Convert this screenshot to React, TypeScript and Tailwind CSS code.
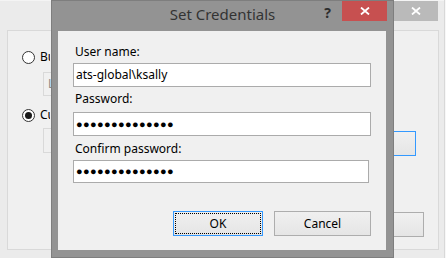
const ui = { fontFamily: '"Noto Sans", "Open Sans", sans-serif' };

function Radio({ checked }: { checked?: boolean }) {
  return (
    <span className="flex h-[13px] w-[13px] items-center justify-center rounded-full border border-[#333333] bg-white">
      {checked && <span className="h-[7px] w-[7px] rounded-full bg-[#1a1a1a]" />}
    </span>
  );
}

function CloseGlyph() {
  return (
    <svg width="10" height="8" viewBox="0 0 10 8">
      <path d="M1 0.5 L9 7.5 M9 0.5 L1 7.5" stroke="white" strokeWidth="1.8" fill="none" />
    </svg>
  );
}

// text of the window behind is cut off where the dialog starts
function Clipped({ text, width }: { text: string; width: string }) {
  return <span className={`overflow-hidden whitespace-nowrap ${width}`}>{text}</span>;
}

function BackgroundWindow() {
  return (
    <div className="flex h-full w-[445px] flex-col border-r border-[#d8d8d8] bg-[#ebebeb]">
      <div className="flex h-[21px] justify-end border-t border-[#f4f4f4] pr-[6px]">
        <div className="flex h-[20px] w-[45px] items-center justify-center bg-[#bababa]">
          <CloseGlyph />
        </div>
      </div>
      <div className="ml-[7px] mt-[9px] flex h-[220px] w-[432px] flex-col border border-[#d9d9d9] bg-[#f0f0f0] pl-[14px] pt-[17px] text-[12px] text-black">
        <div className="flex items-center gap-[5px]">
          <Radio />
          <Clipped text="Built-in account" width="w-[10px]" />
        </div>
        <div className="ml-[21px] mt-[6px] flex h-[24px] w-[300px] items-center border border-[#d9d9d9] bg-[#f0f0f0] pl-[4px] text-[#8a8a8a]">
          <Clipped text="Local System" width="w-[4px]" />
        </div>
        <div className="mt-[10px] flex items-center gap-[5px]">
          <Radio checked />
          <Clipped text="Custom account" width="w-[10px]" />
        </div>
        <div className="ml-[21px] mt-[4px] flex items-start gap-[4px]">
          <div className="h-[25px] w-[280px] border border-[#d9d9d9] bg-[#f0f0f0]" />
          <div className="mt-[3px] h-[25px] w-[89px] border border-[#3399ff] bg-gradient-to-b from-[#f0f0f0] to-[#e5e5e5]" />
        </div>
        <div className="mt-[56px] flex justify-end pr-[14px]">
          <div className="h-[25px] w-[90px] border border-[#adadad] bg-gradient-to-b from-[#f0f0f0] to-[#e5e5e5]" />
        </div>
      </div>
    </div>
  );
}

function Field({ children, narrow }: { children: React.ReactNode; narrow?: boolean }) {
  return (
    <div
      className={`flex items-center border border-[#ababab] bg-white pl-[2px] text-[12px] text-black ${
        narrow ? "h-[23px] w-[296px]" : "h-[24px] w-[298px]"
      }`}
    >
      {children}
    </div>
  );
}

function Dots() {
  return (
    <span className="text-[11px] tracking-[0.35px]" style={{ fontFamily: '"Liberation Sans", sans-serif' }}>
      ●●●●●●●●●●●●●●
    </span>
  );
}

function DialogButton({ label, focused, width }: { label: string; focused?: boolean; width: string }) {
  return (
    <button
      className={`relative flex h-[25px] items-center justify-center border bg-gradient-to-b from-[#f0f0f0] to-[#e5e5e5] text-[12px] text-black ${width} ${
        focused ? "border-[#3399ff]" : "border-[#adadad]"
      }`}
    >
      {focused && <span className="absolute inset-[1px] border border-dotted border-black" />}
      {label}
    </button>
  );
}

function CredentialsDialog() {
  return (
    <div className="absolute left-[51px] top-0 flex h-[258px] w-[343px] flex-col border border-[#7e7e7e] bg-[#939393]">
      <div className="grid h-[30px] grid-cols-[1fr_auto_1fr]">
        <div />
        <div className="pt-[2px] text-[15px] text-[#333333]">Set Credentials</div>
        <div className="flex items-start justify-end pr-[6px]">
          <span className="mr-[11px] mt-[1px] text-[14px] font-bold text-[#2d2d2d]">?</span>
          <div className="flex h-[20px] w-[45px] items-center justify-center bg-[#c75050]">
            <CloseGlyph />
          </div>
        </div>
      </div>
      <div className="mx-[6px] mb-[7px] mr-[7px] flex flex-1 flex-col bg-[#f0f0f0] px-[15px] pt-[13px] text-[12px] text-black">
        <label className="pl-[2px] leading-[16px]">User name:</label>
        <div className="mt-[3px]">
          <Field>ats-global\ksally</Field>
        </div>
        <label className="mt-[4px] pl-[2px] leading-[16px]">Password:</label>
        <div className="mt-[5px]">
          <Field>
            <Dots />
          </Field>
        </div>
        <label className="mt-[5px] pl-[2px] leading-[16px]">Confirm password:</label>
        <div className="mt-[3px]">
          <Field narrow>
            <Dots />
          </Field>
        </div>
        <div className="mt-[28px] flex justify-end gap-[11px]">
          <DialogButton label="OK" focused width="w-[90px]" />
          <DialogButton label="Cancel" width="w-[97px]" />
        </div>
      </div>
    </div>
  );
}

export default function App() {
  return (
    <div className="relative flex h-[258px] w-[446px] overflow-hidden bg-[#f7f7f7]" style={ui}>
      <BackgroundWindow />
      <CredentialsDialog />
    </div>
  );
}
